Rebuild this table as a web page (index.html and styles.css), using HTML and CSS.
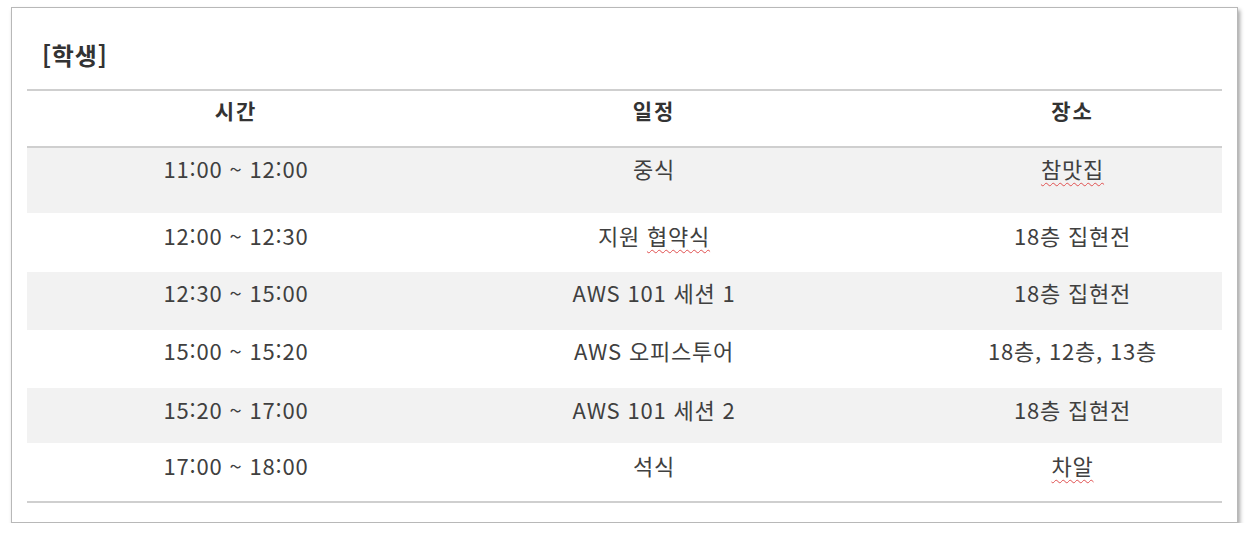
FILE: index.html
```html
<!DOCTYPE html>
<html lang="ko">
<head>
<meta charset="utf-8">
<link rel="stylesheet" href="styles.css">
</head>
<body>
<div class="panel">
  <div class="title">[학생]</div>
  <div class="table">
    <div class="row head">
      <div class="c1">시간</div><div class="c2">일정</div><div class="c3">장소</div>
    </div>
    <div class="row alt r1">
      <div class="c1">11:00 ~ 12:00</div><div class="c2">중식</div><div class="c3"><span class="spell">참맛집</span></div>
    </div>
    <div class="row r2">
      <div class="c1">12:00 ~ 12:30</div><div class="c2">지원 <span class="spell">협약식</span></div><div class="c3">18층 집현전</div>
    </div>
    <div class="row alt r3">
      <div class="c1">12:30 ~ 15:00</div><div class="c2">AWS 101 세션 1</div><div class="c3">18층 집현전</div>
    </div>
    <div class="row r4">
      <div class="c1">15:00 ~ 15:20</div><div class="c2">AWS 오피스투어</div><div class="c3">18층, 12층, 13층</div>
    </div>
    <div class="row alt r5">
      <div class="c1">15:20 ~ 17:00</div><div class="c2">AWS 101 세션 2</div><div class="c3">18층 집현전</div>
    </div>
    <div class="row r6">
      <div class="c1">17:00 ~ 18:00</div><div class="c2">석식</div><div class="c3"><span class="spell">차알</span></div>
    </div>
  </div>
</div>
</body>
</html>
```
FILE: styles.css
```css
html, body {
  margin: 0;
  padding: 0;
  background: #ffffff;
}
body {
  font-family: "Noto Sans CJK KR", "Noto Sans", sans-serif;
  color: #404040;
}
.panel {
  box-sizing: border-box;
  margin: 7px 0 0 11px;
  width: 1227px;
  height: 516px;
  background: #ffffff;
  border: 1px solid #b8b8b8;
  box-shadow: 2px 3px 4px rgba(0, 0, 0, 0.35);
  padding: 0 15px;
}
.title {
  margin-top: 32px;
  padding-left: 15px;
  height: 49px;
  line-height: 30px;
  font-size: 24px;
  font-weight: bold;
  letter-spacing: 0.8px;
  color: #333333;
}
.table {
  border-top: 2px solid #cfcfcf;
  border-bottom: 2px solid #cfcfcf;
}
.row {
  display: grid;
  grid-template-columns: 418px 418px 359px;
  font-size: 22px;
  line-height: 26px;
  letter-spacing: 0.8px;
  padding-top: 7px;
  box-sizing: border-box;
}
.row > div {
  text-align: center;
}
.row .c3 {
  padding-left: 60px;
}
.head {
  height: 57px;
  padding-top: 6px;
  font-size: 21px;
  font-weight: bold;
  letter-spacing: 2px;
  color: #333333;
  border-bottom: 2px solid #cfcfcf;
}
.alt {
  background: #f2f2f2;
}
.r1 { height: 65px; }
.r2 { height: 59px; padding-top: 9px; }
.r3 { height: 58px; }
.r4 { height: 58px; }
.r5 { height: 55px; padding-top: 8px; }
.r6 { height: 58px; padding-top: 9px; }
.spell {
  text-decoration: underline wavy #e05050;
  text-decoration-thickness: 1px;
  text-underline-offset: 4px;
}
```
